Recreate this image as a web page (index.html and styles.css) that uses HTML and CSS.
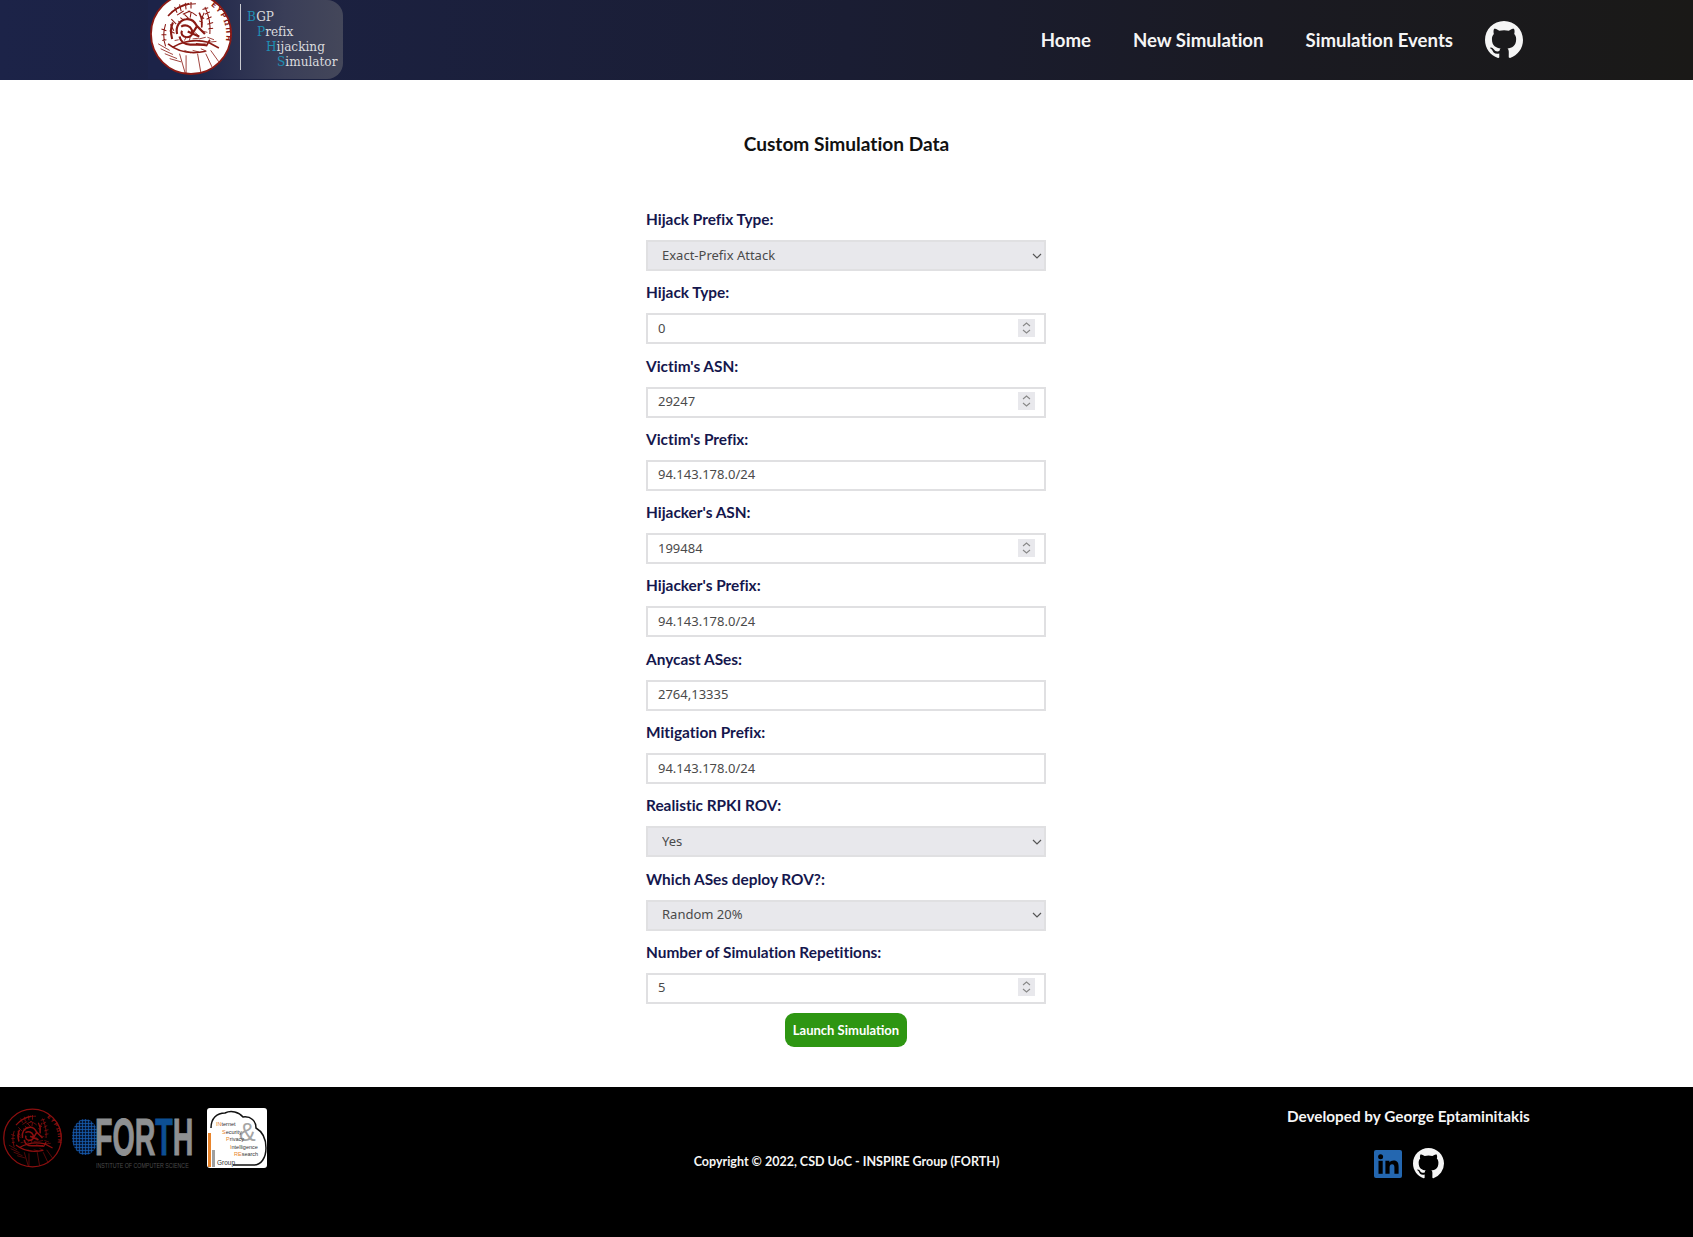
FILE: index.html
```html
<!DOCTYPE html>
<html lang="en">
<head>
<meta charset="utf-8">
<title>BGP Prefix Hijacking Simulator</title>
<link rel="stylesheet" href="styles.css">
</head>
<body>
<svg class="defs" width="0" height="0" aria-hidden="true">
  <defs>
    <symbol id="github" viewBox="0 0 16 16">
      <path fill="currentColor" d="M8 0C3.58 0 0 3.58 0 8c0 3.54 2.29 6.53 5.47 7.59.4.07.55-.17.55-.38 0-.19-.01-.82-.01-1.49-2.01.37-2.53-.49-2.69-.94-.09-.23-.48-.94-.82-1.13-.28-.15-.68-.52-.01-.53.63-.01 1.08.58 1.23.82.72 1.21 1.87.87 2.33.66.07-.52.28-.87.51-1.07-1.78-.2-3.64-.89-3.64-3.95 0-.87.31-1.59.82-2.15-.08-.2-.36-1.02.08-2.12 0 0 .67-.21 2.2.82.64-.18 1.32-.27 2-.27s1.36.09 2 .27c1.53-1.04 2.2-.82 2.2-.82.44 1.1.16 1.92.08 2.12.51.56.82 1.27.82 2.15 0 3.07-1.87 3.75-3.65 3.95.29.25.54.73.54 1.48 0 1.07-.01 1.93-.01 2.2 0 .21.15.46.55.38A8.01 8.01 0 0 0 16 8c0-4.42-3.58-8-8-8z"/>
    </symbol>
    <symbol id="seal" viewBox="0 0 100 100">
      <g fill="none" stroke="currentColor">
        <circle cx="50" cy="50" r="48.8" stroke-width="2.2"/>
        <path stroke-width="2.6" d="M33 50c-2-9 3-17 11-18 6-1 10 2 13 8l10 10M36 53c1 6 6 10 13 10h19M38 41c5-3 11-1 13 4 2 5-1 9-6 9s-8-4-6-8M46 47l14 6M57 41l-5 8M28 36c-3 6-3 13-1 20"/>
        <path stroke-width="2" d="M28 66c12-7 27-10 43-6l13 7M22 62c11 9 27 13 46 9M56 62l13 2 4-7M60 24c3 6 4 12 3 18M22 28c7-8 16-13 26-15"/>
        <path stroke-width="1.3" d="M26 24c8-7 19-11 30-11M30 17l3 7M36 14l2 8M43 12l1 8M50 11l0 8M33 27l8-5M40 26l9-4M67 17c5 10 7 21 6 33M64 20l7-2M67 26l6-3M69 32l6-3M70 38l7-2M71 44l6-1M66 24c-3 6-4 12-3 18M61 28l5 3M60 34l4 2M19 38c-3 9-3 18 0 27M14 44l6 2M14 51h6M15 58l5-1M25 38l4 8M24 46l6 3M26 32l6 6M46 22c4 1 8 3 11 6M42 26l5 5M50 24l-1 6M37 30l4 3"/>
        <path stroke-width="1" d="M10 62l14 8M13 68l15 7M18 74l15 6M24 80l14 4M36 74l7 24M44 76l0 22M58 74l4 23M68 74l8 17M74 70l10 14M42 70l8 3M52 70l8 2M62 68l7 3M62 46l8 2M60 56l8-2M42 58l2-4M48 58l1-4M30 58l5-1M34 34l4 3M70 54l8 3M72 60l9-1M52 56l8-1M55 48l5 5"/>
      </g>
      <path id="seal-arc" fill="none" d="M74 15A43 43 0 0 1 91 64"/>
      <text class="seal-text" fill="currentColor" font-size="8.5"><textPath href="#seal-arc">ΕΥΡΩΠΗ</textPath></text>
    </symbol>
  </defs>
</svg>

<header class="topbar">
  <a class="brand" href="#">
    <svg class="brand-seal" viewBox="0 0 100 100" aria-hidden="true"><circle cx="50" cy="50" r="49" fill="#fff"/><use href="#seal" width="100" height="100"/></svg>
    <span class="brand-rule"></span>
    <span class="brand-name">
      <span class="brand-line l1"><b>B</b>GP</span>
      <span class="brand-line l2"><b>P</b>refix</span>
      <span class="brand-line l3"><b>H</b>ijacking</span>
      <span class="brand-line l4"><b>S</b>imulator</span>
    </span>
  </a>
  <nav class="nav">
    <a href="#">Home</a>
    <a href="#">New Simulation</a>
    <a href="#">Simulation Events</a>
    <svg class="nav-github"><use href="#github"/></svg>
  </nav>
</header>

<main class="content">
  <h1 class="title">Custom Simulation Data</h1>
  <form class="sim-form">
    <label class="field"><span class="field-label">Hijack Prefix Type:</span>
      <select class="control control-select"><option>Exact-Prefix Attack</option></select></label>
    <label class="field"><span class="field-label">Hijack Type:</span>
      <input class="control" type="number" value="0"></label>
    <label class="field"><span class="field-label">Victim's ASN:</span>
      <input class="control" type="number" value="29247"></label>
    <label class="field"><span class="field-label">Victim's Prefix:</span>
      <input class="control" type="text" value="94.143.178.0/24"></label>
    <label class="field"><span class="field-label">Hijacker's ASN:</span>
      <input class="control" type="number" value="199484"></label>
    <label class="field"><span class="field-label">Hijacker's Prefix:</span>
      <input class="control" type="text" value="94.143.178.0/24"></label>
    <label class="field"><span class="field-label">Anycast ASes:</span>
      <input class="control" type="text" value="2764,13335"></label>
    <label class="field"><span class="field-label">Mitigation Prefix:</span>
      <input class="control" type="text" value="94.143.178.0/24"></label>
    <label class="field"><span class="field-label">Realistic RPKI ROV:</span>
      <select class="control control-select"><option>Yes</option></select></label>
    <label class="field"><span class="field-label">Which ASes deploy ROV?:</span>
      <select class="control control-select"><option>Random 20%</option></select></label>
    <label class="field"><span class="field-label">Number of Simulation Repetitions:</span>
      <input class="control" type="number" value="5"></label>
    <button class="launch" type="button">Launch Simulation</button>
  </form>
</main>

<footer class="footer">
  <div class="footer-logos">
    <svg class="foot-seal" aria-hidden="true"><use href="#seal"/></svg>
    <div class="forth">
      <span class="forth-dot"></span>
      <span class="forth-word">FOR<i>T</i>H</span>
      <span class="forth-sub">INSTITUTE OF COMPUTER SCIENCE</span>
    </div>
    <div class="inspire">
      <svg class="inspire-cloud" viewBox="0 0 60 60" aria-hidden="true"><path fill="none" stroke="#111" stroke-width="1.5" d="M4 20C4 10 10 5 18 5 24 2 32 4 36 9 44 8 49 13 49 20 56 24 59 32 59 40 59 50 54 57 47 57H26"/><rect x="1" y="25" width="3" height="34" fill="#e8842b"/><rect x="5" y="42" width="3" height="17" fill="#a0a0a0"/></svg>
      <span class="ins-amp">&amp;</span>
      <span class="ins-line i1"><b>IN</b>ternet</span>
      <span class="ins-line i2"><b>S</b>ecurity</span>
      <span class="ins-line i3"><b>P</b>rivacy</span>
      <span class="ins-line i4"><b>I</b>ntelligence</span>
      <span class="ins-line i5"><b>RE</b>search</span>
      <span class="ins-group">Group</span>
    </div>
  </div>
  <p class="copyright">Copyright © 2022, CSD UoC - INSPIRE Group (FORTH)</p>
  <div class="developer">
    <p class="developer-name">Developed by George Eptaminitakis</p>
    <div class="developer-links">
      <svg class="linkedin" viewBox="0 0 28 28" aria-hidden="true"><rect width="28" height="28" rx="2" fill="#2467b0"/><circle cx="6.6" cy="6.8" r="2.5" fill="#000"/><rect x="4.5" y="10.8" width="4.2" height="13" fill="#000"/><path fill="#000" d="M11.4 10.8h4v1.8c.7-1.2 2.2-2.1 4.2-2.1 4 0 5 2.5 5 6.2v7.1h-4.2v-6.3c0-1.7-.3-3.3-2.3-3.3s-2.5 1.5-2.5 3.2v6.4h-4.2z"/></svg>
      <svg class="foot-github"><use href="#github"/></svg>
    </div>
  </div>
</footer>
</body>
</html>
```
FILE: styles.css
```css
* { box-sizing: border-box; }
html, body { margin: 0; padding: 0; }
body { background: #fff; font-family: "Lato", "Noto Sans", sans-serif; font-variant-ligatures: none; min-height: 1237px; display: flex; flex-direction: column; }
.defs { position: absolute; }
a { text-decoration: none; color: inherit; }

.topbar { height: 80px; display: flex; justify-content: space-between; align-items: stretch; padding: 0 170px 0 148px; background: linear-gradient(90deg, #1c2348 0%, #1a1d33 50%, #1a1a22 75%, #1a1917 100%); color: #f5f5f5; overflow: hidden; }
.brand { width: 195px; height: 79px; display: flex; align-items: center; background: linear-gradient(90deg, #1c2348 20%, #3a3e58 70%, #44475a 100%); border-radius: 0 16px 16px 0; }
.brand-seal { width: 82px; height: 82px; flex: none; color: #8b1a14; margin: -11px 0 0 2px; }
.seal-text { font-family: "DejaVu Sans", sans-serif; font-weight: 700; letter-spacing: 2px; }
.brand-rule { width: 1px; height: 66px; background: #c9cad0; margin: -5px 6px 0 8px; flex: none; }
.brand-name { display: flex; flex-direction: column; font-family: "DejaVu Serif", serif; font-size: 12.1px; color: #d9dadd; white-space: nowrap; margin-top: 1px; }
.brand-line { display: block; height: 15px; line-height: 15px; }
.brand-name b { font-weight: 400; color: #1f8fb2; }
.l2 { padding-left: 10px; }
.l3 { padding-left: 19px; }
.l4 { padding-left: 30px; }

.nav { display: flex; align-items: center; gap: 42px; font-size: 18.6px; font-weight: 700; }
.nav-github { width: 38px; height: 38px; color: #f5f5f5; margin-left: -10px; }

.content { flex: 1; display: flex; flex-direction: column; align-items: center; }
.title { margin: 52px 0 0; font-size: 19.1px; line-height: 23px; font-weight: 700; color: #111; }
.sim-form { width: 400px; margin: 54px 1px 0 0; display: flex; flex-direction: column; }
.field { display: flex; flex-direction: column; height: 73.3px; }
.field-label { font-size: 15.4px; font-weight: 700; color: #15174d; line-height: 20px; margin-bottom: 11px; }
.control { width: 400px; height: 31px; flex: none; border: 2px solid #e0e0e2; border-radius: 0; background: #fff; font-family: "Noto Sans", sans-serif; font-size: 13px; color: #4a4a4a; padding: 0 9px 2px 10px; outline: none; }
.control-select { appearance: none; -webkit-appearance: none; padding: 0 30px 2px 14px; background: #e8e8ec url("data:image/svg+xml,%3Csvg xmlns='http://www.w3.org/2000/svg' width='10' height='6'%3E%3Cpath d='M1 1l4 4 4-4' fill='none' stroke='%23555' stroke-width='1.2'/%3E%3C/svg%3E") no-repeat right 2px center; }
.control::-webkit-inner-spin-button { -webkit-appearance: none; appearance: none; opacity: 1; width: 17px; height: 18px; background: #e8e8ec url("data:image/svg+xml,%3Csvg xmlns='http://www.w3.org/2000/svg' width='17' height='18'%3E%3Cpath d='M5 7l3.5-3 3.5 3M5 11l3.5 3 3.5-3' fill='none' stroke='%23888' stroke-width='1.1'/%3E%3C/svg%3E") no-repeat center; }
.launch { align-self: center; width: 122px; height: 34px; margin-top: -2px; border: 0; border-radius: 9px; background: #2e9612; color: #fff; font-family: "Lato", sans-serif; font-size: 13px; font-weight: 700; padding: 0; }

.footer { height: 150px; background: #000; color: #f5f5f5; display: grid; grid-template-columns: 1fr auto 1fr; font-weight: 700; }
.footer-logos { display: flex; align-items: flex-start; padding: 21px 0 0 3px; gap: 10px; }
.foot-seal { width: 59px; height: 60px; color: #8b0f0f; }
.forth { position: relative; width: 122px; height: 60px; }
.forth-dot { position: absolute; left: 0; top: 11px; width: 26px; height: 36px; border-radius: 50%; background: radial-gradient(circle, #1558a8 .9px, #051633 1.4px) 0 0 / 3px 3px; }
.forth-word { position: absolute; left: 23px; top: 9px; font-family: "Liberation Sans", sans-serif; font-weight: 700; font-size: 52px; line-height: 40px; color: #8e9092; -webkit-text-stroke: 1px #8e9092; transform: scaleX(.55); transform-origin: left; }
.forth-word i { font-style: normal; color: #0d4f94; -webkit-text-stroke-color: #0d4f94; }
.forth-sub { position: absolute; left: 24px; top: 53px; font-family: "Liberation Sans", sans-serif; font-weight: 400; font-size: 8px; line-height: 9px; color: #4c4c4c; white-space: nowrap; transform: scaleX(.66); transform-origin: left; }
.inspire { position: relative; width: 60px; height: 60px; background: #fff; border-radius: 3px; font-family: "Liberation Sans", sans-serif; font-weight: 400; color: #333; font-size: 5.5px; line-height: 7px; margin-left: 3px; }
.inspire-cloud { position: absolute; inset: 0; }
.ins-line { position: absolute; white-space: nowrap; }
.ins-line b { color: #e8842b; font-weight: 400; }
.i1 { left: 9px; top: 13px; }
.i2 { left: 15px; top: 21px; }
.i3 { left: 19px; top: 28px; }
.i4 { left: 23px; top: 36px; }
.i5 { left: 27px; top: 43px; }
.ins-amp { position: absolute; left: 32px; top: 11px; font-size: 25px; line-height: 26px; color: #a5a5a5; }
.ins-group { position: absolute; left: 10px; top: 51px; font-size: 6.5px; }
.copyright { margin: 66px 0 0; font-size: 12.5px; line-height: 18px; white-space: nowrap; }
.developer { justify-self: end; width: 306px; margin-right: 100px; padding-top: 20px; display: flex; flex-direction: column; align-items: flex-start; }
.developer-name { margin: 0; font-size: 15.3px; line-height: 19px; white-space: nowrap; }
.developer-links { margin: 22px 0 0 87px; display: flex; align-items: center; gap: 11px; }
.linkedin { width: 28px; height: 28px; }
.foot-github { width: 31px; height: 31px; color: #f5f5f5; }
```
